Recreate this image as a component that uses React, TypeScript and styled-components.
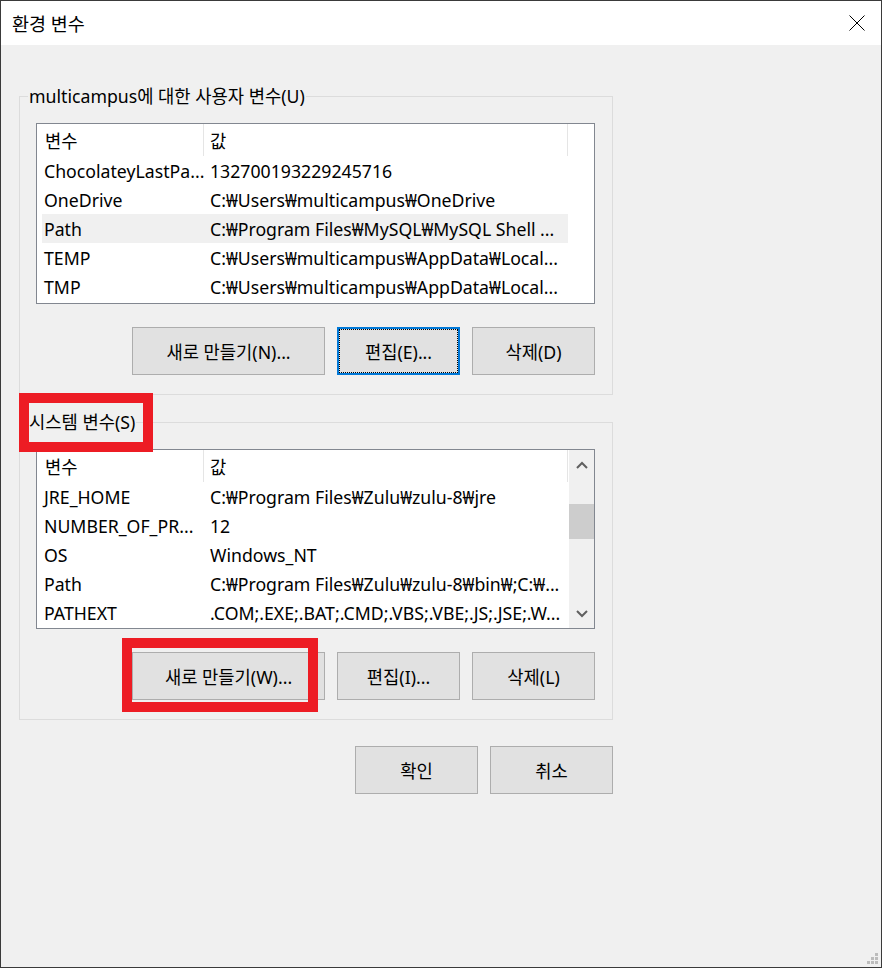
import React from "react";
import styled, { createGlobalStyle } from "styled-components";

const GlobalStyle = createGlobalStyle`
  html, body {
    margin: 0;
    padding: 0;
    background: #fff;
  }
`;

const FONT = `"Noto Sans", "Noto Sans CJK KR", sans-serif`;

const Window = styled.div`
  position: relative;
  box-sizing: border-box;
  width: 882px;
  height: 968px;
  border: 1px solid #3a3a3a;
  background: #f0f0f0;
  display: flex;
  flex-direction: column;
  font-family: ${FONT};
  font-size: 17.7px;
  color: #000;
`;

const TitleBar = styled.div`
  flex: none;
  height: 44px;
  background: #fff;
  display: flex;
  align-items: center;
  padding-left: 11px;
`;

const Title = styled.div`
  flex: 1;
  font-size: 18.5px;
`;

const CloseButton = styled.div`
  width: 48px;
  height: 44px;
  display: flex;
  align-items: center;
  justify-content: center;
`;

const Body = styled.div`
  width: 594px;
  padding: 39px 0 0 18px;
  display: flex;
  flex-direction: column;
`;

const Group = styled.fieldset<{ $gap?: number }>`
  margin: ${(p) => p.$gap ?? 0}px 0 0 0;
  padding: 0;
  min-width: 0;
  border: 1px solid #dcdcdc;
`;

const Legend = styled.legend`
  margin-left: 8px;
  padding: 0 1px;
  line-height: 24px;
`;

const LegendText = styled.span`
  position: relative;
  display: inline-block;
`;

const LegendMark = styled.span`
  position: absolute;
  left: -10px;
  top: -17px;
  width: 134px;
  height: 59px;
  box-sizing: border-box;
  border: 10px solid #ed1c24;
  pointer-events: none;
`;

const GroupContent = styled.div`
  padding: 15px 17px 19px 16px;
  display: flex;
  flex-direction: column;
`;

const ListView = styled.div<{ $height: number }>`
  box-sizing: border-box;
  height: ${(p) => p.$height}px;
  border: 1px solid #828790;
  background: #fff;
  display: flex;
  overflow: hidden;
`;

const ListTable = styled.div`
  margin-left: 5px;
  width: 526px;
  flex: none;
  display: flex;
  flex-direction: column;
`;

const HeaderRow = styled.div`
  display: flex;
  height: 32px;
  flex: none;
`;

const HeaderCell = styled.div<{ $width: number; $pad: number }>`
  box-sizing: border-box;
  width: ${(p) => p.$width}px;
  padding-left: ${(p) => p.$pad}px;
  border-right: 1px solid #e5e5e5;
  display: flex;
  align-items: center;
`;

const Row = styled.div<{ $selected?: boolean }>`
  display: flex;
  height: 29px;
  flex: none;
  align-items: center;
  background: ${(p) => (p.$selected ? "#f0f0f0" : "transparent")};
  white-space: nowrap;
`;

const NameCell = styled.div`
  box-sizing: border-box;
  width: 162px;
  padding-left: 2px;
  overflow: hidden;
`;

const ValueCell = styled.div`
  flex: 1;
  padding-left: 6px;
  overflow: hidden;
`;

const ScrollBar = styled.div`
  width: 25px;
  margin-left: 1px;
  background: #f0f0f0;
  display: flex;
  flex-direction: column;
`;

const ScrollArrow = styled.div`
  height: 29px;
  display: flex;
  align-items: center;
  justify-content: center;
`;

const ScrollTrack = styled.div`
  flex: 1;
`;

const ScrollThumb = styled.div`
  height: 35px;
  margin-top: 25px;
  background: #cdcdcd;
`;

const ButtonRow = styled.div<{ $gap: number }>`
  display: flex;
  justify-content: flex-end;
  gap: 12px;
  margin-top: ${(p) => p.$gap}px;
`;

const Button = styled.button<{ $width: number; $focused?: boolean }>`
  box-sizing: border-box;
  width: ${(p) => p.$width}px;
  height: 48px;
  margin: 0;
  padding: 0;
  border: ${(p) => (p.$focused ? "2px solid #0078d7" : "1px solid #adadad")};
  outline: ${(p) => (p.$focused ? "1px dotted #000" : "none")};
  outline-offset: -3px;
  background: #e1e1e1;
  font-family: ${FONT};
  font-size: 17.7px;
  color: #000;
`;

const MarkedWrap = styled.div`
  position: relative;
  display: flex;
`;

const ButtonMark = styled.div`
  position: absolute;
  left: -10px;
  top: -14px;
  width: 196px;
  height: 74px;
  box-sizing: border-box;
  border: 10px solid #ed1c24;
  pointer-events: none;
  z-index: 1;
`;

const SizeGrip = styled.svg`
  position: absolute;
  right: 2px;
  bottom: 2px;
`;

type Entry = { name: string; value: string; selected?: boolean };

const userVars: Entry[] = [
  { name: "ChocolateyLastPa...", value: "132700193229245716" },
  { name: "OneDrive", value: "C:₩Users₩multicampus₩OneDrive" },
  { name: "Path", value: "C:₩Program Files₩MySQL₩MySQL Shell ...", selected: true },
  { name: "TEMP", value: "C:₩Users₩multicampus₩AppData₩Local..." },
  { name: "TMP", value: "C:₩Users₩multicampus₩AppData₩Local..." },
];

const systemVars: Entry[] = [
  { name: "JRE_HOME", value: "C:₩Program Files₩Zulu₩zulu-8₩jre" },
  { name: "NUMBER_OF_PR...", value: "12" },
  { name: "OS", value: "Windows_NT" },
  { name: "Path", value: "C:₩Program Files₩Zulu₩zulu-8₩bin₩;C:₩..." },
  { name: "PATHEXT", value: ".COM;.EXE;.BAT;.CMD;.VBS;.VBE;.JS;.JSE;.W..." },
];

function Chevron({ up }: { up?: boolean }) {
  return (
    <svg width="12" height="8" viewBox="0 0 12 8">
      <polyline
        points={up ? "1,7 6,2 11,7" : "1,1 6,6 11,1"}
        fill="none"
        stroke="#606060"
        strokeWidth="2"
      />
    </svg>
  );
}

function VarList({ rows, height, scroll }: { rows: Entry[]; height: number; scroll?: boolean }) {
  return (
    <ListView $height={height}>
      <ListTable>
        <HeaderRow>
          <HeaderCell $width={162} $pad={3}>변수</HeaderCell>
          <HeaderCell $width={364} $pad={6}>값</HeaderCell>
        </HeaderRow>
        {rows.map((r) => (
          <Row key={r.name} $selected={r.selected}>
            <NameCell>{r.name}</NameCell>
            <ValueCell>{r.value}</ValueCell>
          </Row>
        ))}
      </ListTable>
      {scroll && (
        <ScrollBar>
          <ScrollArrow>
            <Chevron up />
          </ScrollArrow>
          <ScrollTrack>
            <ScrollThumb />
          </ScrollTrack>
          <ScrollArrow>
            <Chevron />
          </ScrollArrow>
        </ScrollBar>
      )}
    </ListView>
  );
}

export default function App() {
  return (
    <>
      <GlobalStyle />
      <Window>
        <TitleBar>
          <Title>환경 변수</Title>
          <CloseButton>
            <svg width="16" height="16" viewBox="0 0 16 16">
              <path d="M0.5 0.5 L15.5 15.5 M15.5 0.5 L0.5 15.5" stroke="#000" strokeWidth="1" />
            </svg>
          </CloseButton>
        </TitleBar>

        <Body>
          <Group>
            <Legend>multicampus에 대한 사용자 변수(U)</Legend>
            <GroupContent>
              <VarList rows={userVars} height={181} />
              <ButtonRow $gap={23}>
                <Button $width={193}>새로 만들기(N)...</Button>
                <Button $width={123} $focused>편집(E)...</Button>
                <Button $width={123}>삭제(D)</Button>
              </ButtonRow>
            </GroupContent>
          </Group>

          <Group $gap={15}>
            <Legend>
              <LegendText>
                시스템 변수(S)
                <LegendMark />
              </LegendText>
            </Legend>
            <GroupContent>
              <VarList rows={systemVars} height={180} scroll />
              <ButtonRow $gap={23}>
                <MarkedWrap>
                  <Button $width={193}>새로 만들기(W)...</Button>
                  <ButtonMark />
                </MarkedWrap>
                <Button $width={123}>편집(I)...</Button>
                <Button $width={123}>삭제(L)</Button>
              </ButtonRow>
            </GroupContent>
          </Group>

          <ButtonRow $gap={26}>
            <Button $width={123}>확인</Button>
            <Button $width={123}>취소</Button>
          </ButtonRow>
        </Body>

        <SizeGrip width="12" height="12" viewBox="0 0 12 12">
          <rect x="8" y="0" width="3" height="3" fill="#bcbcbc" />
          <rect x="4" y="4" width="3" height="3" fill="#bcbcbc" />
          <rect x="8" y="4" width="3" height="3" fill="#bcbcbc" />
          <rect x="0" y="8" width="3" height="3" fill="#bcbcbc" />
          <rect x="4" y="8" width="3" height="3" fill="#bcbcbc" />
          <rect x="8" y="8" width="3" height="3" fill="#bcbcbc" />
        </SizeGrip>
      </Window>
    </>
  );
}
